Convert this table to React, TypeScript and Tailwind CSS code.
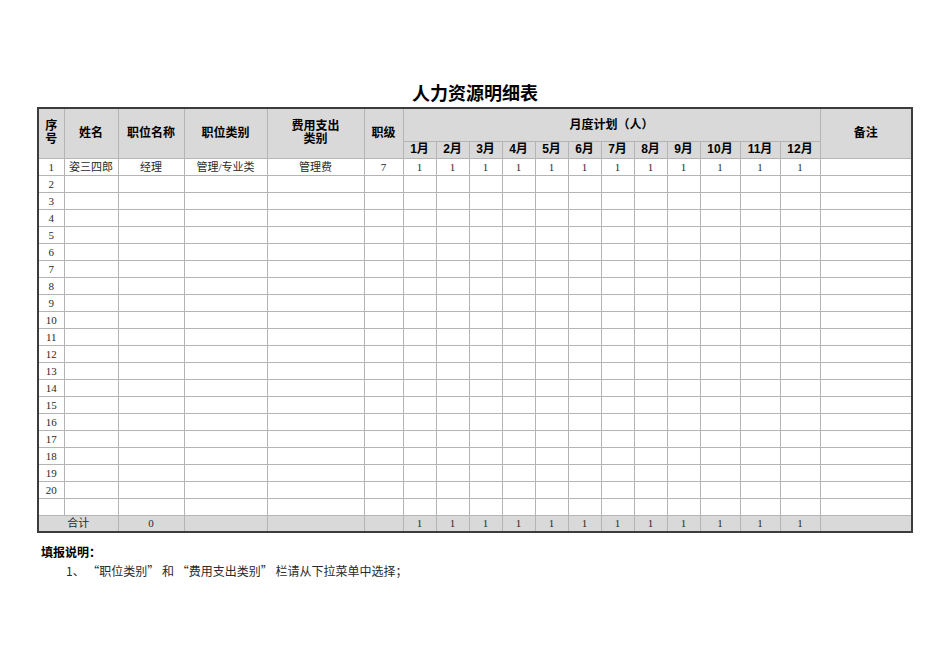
const months = ['1月', '2月', '3月', '4月', '5月', '6月', '7月', '8月', '9月', '10月', '11月', '12月'];

const colWidths = [26, 54, 66, 83, 97, 39, 33, 33, 33, 33, 33, 33, 33, 33, 33, 40, 40, 40, 92];

const sans = { fontFamily: '"Liberation Sans", "Noto Sans CJK SC", sans-serif' };
const cjk = { fontFamily: '"Noto Sans CJK SC", "Liberation Serif", sans-serif' };

const cell = 'border border-[#b4b4b4] p-0 text-center align-middle';
const head = `${cell} bg-[#d9d9d9] font-bold text-[12px] text-black`;

export default function App() {
  const rows = Array.from({ length: 21 }, (_, i) => i + 1);

  return (
    <div
      className="w-[950px] h-[672px] bg-white text-black"
      style={{ fontFamily: '"Liberation Serif", "Noto Sans CJK SC", serif' }}
    >
      {/* title */}
      <div className="pt-[82px]">
        <div className="h-[25px] leading-[25px] text-center text-[18px] font-bold" style={sans}>
          人力资源明细表
        </div>
      </div>

      <table className="ml-[37px] w-[874px] table-fixed border-collapse border-2 border-[#3c3c3c]">
        <colgroup>
          {colWidths.map((w, i) => (
            <col key={i} style={{ width: w }} />
          ))}
        </colgroup>
        <thead style={sans}>
          <tr className="h-[33px]">
            <th rowSpan={2} className={`${head} leading-[13px]`}>
              序<br />号
            </th>
            <th rowSpan={2} className={head}>姓名</th>
            <th rowSpan={2} className={head}>职位名称</th>
            <th rowSpan={2} className={head}>职位类别</th>
            <th rowSpan={2} className={`${head} leading-[13px]`}>
              费用支出
              <br />
              类别
            </th>
            <th rowSpan={2} className={head}>职级</th>
            <th colSpan={12} className={head}>月度计划（人）</th>
            <th rowSpan={2} className={head}>备注</th>
          </tr>
          <tr className="h-[17px]">
            {months.map((m) => (
              <th key={m} className={`${head} leading-[15px]`}>{m}</th>
            ))}
          </tr>
        </thead>
        <tbody className="text-[11px] text-[#2a2a2a]">
          {rows.map((r) => {
            const first = r === 1;
            return (
              <tr key={r} className="h-[17px] leading-[14px]">
                <td className={cell}>{r <= 20 ? r : ''}</td>
                <td className={cell}>{first ? '姿三四郎' : ''}</td>
                <td className={cell}>{first ? '经理' : ''}</td>
                <td className={cell}>{first ? '管理/专业类' : ''}</td>
                <td className={cell}>{first ? '管理费' : ''}</td>
                <td className={cell}>{first ? '7' : ''}</td>
                {months.map((m) => (
                  <td key={m} className={cell}>{first ? '1' : ''}</td>
                ))}
                <td className={cell}></td>
              </tr>
            );
          })}
          <tr className="h-[17px] leading-[14px] bg-[#d9d9d9]">
            <td colSpan={2} className={cell}>合计</td>
            <td className={cell}>0</td>
            <td className={cell}></td>
            <td className={cell}></td>
            <td className={cell}></td>
            {months.map((m) => (
              <td key={m} className={cell}>1</td>
            ))}
            <td className={cell}></td>
          </tr>
        </tbody>
      </table>

      {/* notes */}
      <div className="pt-[12px] pl-[41px] text-[12px] leading-[17px]">
        <div className="font-bold" style={sans}>填报说明：</div>
        <div className="pl-[25px] text-[#2a2a2a]" style={cjk}>
          1、 “职位类别” 和 “费用支出类别” 栏请从下拉菜单中选择；
        </div>
      </div>
    </div>
  );
}
